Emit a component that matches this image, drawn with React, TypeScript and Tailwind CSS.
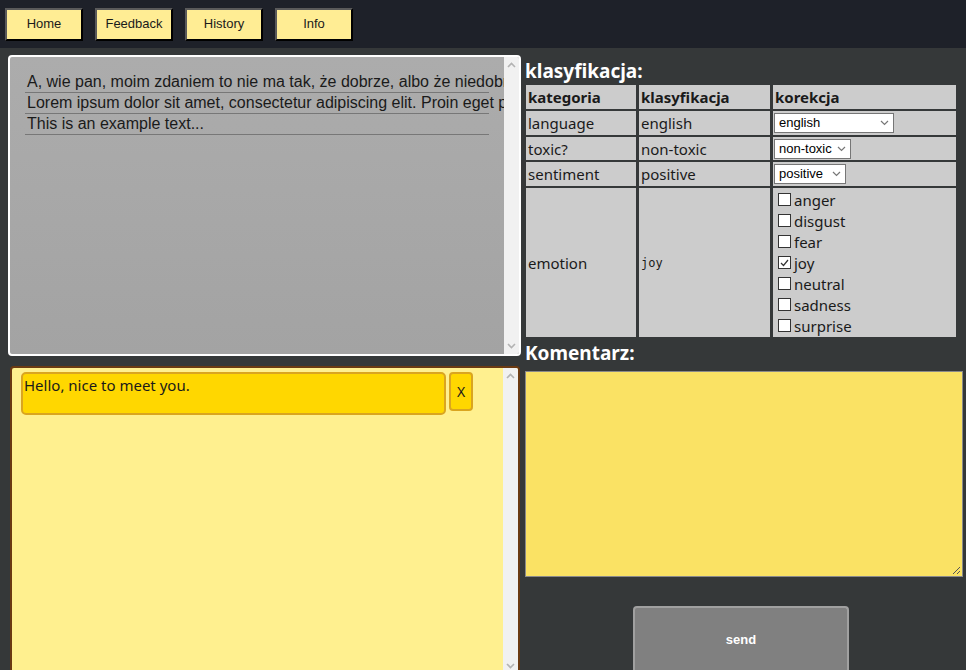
import React from "react";

const SANS = "font-['Noto_Sans','Open_Sans',sans-serif]";
const ARIAL = "font-['Liberation_Sans',Arial,sans-serif]";

function NavButton({ label }: { label: string }) {
  return (
    <button
      className={`w-[78px] h-[33px] bg-[#ffed94] text-[13px] text-[#1a1a1a] ${ARIAL} border-2 border-t-[#5a5a5a] border-l-[#5a5a5a] border-r-black border-b-black`}
    >
      {label}
    </button>
  );
}

function Chevron({ up }: { up?: boolean }) {
  return (
    <svg width="9" height="6" viewBox="0 0 9 6" className="block">
      <path
        d={up ? "M1 5 L4.5 1.5 L8 5" : "M1 1 L4.5 4.5 L8 1"}
        stroke="#b3b3b3"
        strokeWidth="1.6"
        fill="none"
      />
    </svg>
  );
}

function FakeScrollbar() {
  return (
    <div className="w-[15px] shrink-0 bg-[#f1f1f1] flex flex-col justify-between items-center py-[5px]">
      <Chevron up />
      <Chevron />
    </div>
  );
}

const lines = [
  "A, wie pan, moim zdaniem to nie ma tak, że dobrze, albo że niedobrze, bo to zależy",
  "Lorem ipsum dolor sit amet, consectetur adipiscing elit. Proin eget pulvinar nunc",
  "This is an example text...",
];

const emotions = ["anger", "disgust", "fear", "joy", "neutral", "sadness", "surprise"];

function Cell({ children, className = "" }: { children: React.ReactNode; className?: string }) {
  return (
    <div className={`bg-[#cccccc] flex items-center text-[15px] leading-[20px] text-[#1a1a1a] ${className}`}>
      {children}
    </div>
  );
}

function Select({ value, width }: { value: string; width: string }) {
  return (
    <div
      className={`${width} h-[20px] bg-white border border-[#767676] flex items-center justify-between pl-[4px] pr-[4px] text-[13px] text-black ${ARIAL}`}
    >
      <span>{value}</span>
      <svg width="9" height="6" viewBox="0 0 9 6">
        <path d="M1 1 L4.5 4.5 L8 1" stroke="#777" strokeWidth="1.2" fill="none" />
      </svg>
    </div>
  );
}

export default function App() {
  return (
    <div className="w-[966px] h-[670px] overflow-hidden bg-[#353839] flex flex-col">
      <div className="h-[48px] shrink-0 bg-[#1e2129] flex items-center gap-3 px-[5px]">
        <NavButton label="Home" />
        <NavButton label="Feedback" />
        <NavButton label="History" />
        <NavButton label="Info" />
      </div>

      <div className="flex pt-[7px] gap-[4px]">
        {/* left column */}
        <div className="w-[513px] ml-[8px] flex flex-col gap-[10px]">
          <div className="h-[301px] border-2 border-white rounded-[4px] bg-gradient-to-b from-[#acacac] to-[#a3a3a3] flex overflow-hidden">
            <div className={`flex-1 overflow-hidden pt-[15px] pl-[15px] ${ARIAL}`}>
              {lines.map((l) => (
                <div
                  key={l}
                  className="w-[464px] border-b border-[#777] text-[16px] leading-[20px] whitespace-nowrap pl-[2px] text-[#1a1a1a]"
                >
                  {l}
                </div>
              ))}
            </div>
            <FakeScrollbar />
          </div>

          <div className="h-[310px] ml-[2px] w-[510px] border-2 border-[#6b3a12] rounded-[4px] bg-[#fff08f] flex overflow-hidden">
            <div className={`flex-1 pt-[4px] pl-[9px] flex items-start gap-[3px] ${SANS}`}>
              <div className="w-[425px] h-[43px] bg-[#ffd700] border-2 border-[#daa520] rounded-[5px] text-[15px] leading-[20px] text-[#1a1a1a] pl-[1px] pt-[1px]">
                Hello, nice to meet you.
              </div>
              <div className="w-[24px] h-[39px] bg-[#ffd700] border-2 border-[#daa520] rounded-[4px] flex items-center justify-center text-[14px] text-[#1a1a1a]">
                X
              </div>
            </div>
            <FakeScrollbar />
          </div>
        </div>

        {/* right column */}
        <div className={`w-[438px] flex flex-col ${SANS}`}>
          <div className="text-[19px] leading-[24px] font-bold text-white mt-[4px]">klasyfikacja:</div>
          <div className="ml-[1px] mt-[2px] grid grid-cols-[110px_131px_183px] gap-x-[3px] gap-y-[2px]">
            <Cell className="h-[24px] font-bold pl-[2px]">kategoria</Cell>
            <Cell className="h-[24px] font-bold pl-[2px]">klasyfikacja</Cell>
            <Cell className="h-[24px] font-bold pl-[2px]">korekcja</Cell>

            <Cell className="h-[24px] pl-[2px]">language</Cell>
            <Cell className="h-[24px] pl-[2px]">english</Cell>
            <Cell className="h-[24px] pl-[1px]">
              <Select value="english" width="w-[120px]" />
            </Cell>

            <Cell className="h-[23px] pl-[2px]">toxic?</Cell>
            <Cell className="h-[23px] pl-[2px]">non-toxic</Cell>
            <Cell className="h-[23px] pl-[1px]">
              <Select value="non-toxic" width="w-[77px]" />
            </Cell>

            <Cell className="h-[24px] pl-[2px]">sentiment</Cell>
            <Cell className="h-[24px] pl-[2px]">positive</Cell>
            <Cell className="h-[24px] pl-[1px]">
              <Select value="positive" width="w-[72px]" />
            </Cell>

            <Cell className="h-[149px] pl-[2px]">emotion</Cell>
            <Cell className="h-[149px] pl-[2px]">
              <span className="font-['DejaVu_Sans_Mono',monospace] text-[12px]">joy</span>
            </Cell>
            <Cell className="h-[149px] pl-[5px]">
              <div className="flex flex-col">
                {emotions.map((e) => (
                  <label key={e} className="flex items-center h-[21px] gap-[3px] text-[15px]">
                    <span className="w-[13px] h-[13px] border border-[#333] bg-white flex items-center justify-center">
                      {e === "joy" && (
                        <svg width="9" height="8" viewBox="0 0 9 8">
                          <path d="M1 4 L3.5 6.5 L8 1" stroke="#333" strokeWidth="1.2" fill="none" />
                        </svg>
                      )}
                    </span>
                    <span>{e}</span>
                  </label>
                ))}
              </div>
            </Cell>
          </div>

          <div className="text-[19px] leading-[24px] font-bold text-white mt-[4px]">Komentarz:</div>
          <div className="mt-[6px] w-[438px] h-[206px] bg-[#fae264] border border-[#8a8a8a] relative">
            <svg width="10" height="10" viewBox="0 0 10 10" className="absolute right-[1px] bottom-[1px]">
              <path d="M9 2 L2 9 M9 6 L6 9" stroke="#555" strokeWidth="1" />
            </svg>
          </div>

          <div className="mt-[29px] ml-[108px] w-[216px] h-[70px] bg-[#808080] border-2 border-[#a0a0a0] border-b-0 rounded-t-[4px] flex items-start justify-center pt-[22px]">
            <span className={`text-[13px] font-bold text-white ${ARIAL}`}>send</span>
          </div>
        </div>
      </div>
    </div>
  );
}
